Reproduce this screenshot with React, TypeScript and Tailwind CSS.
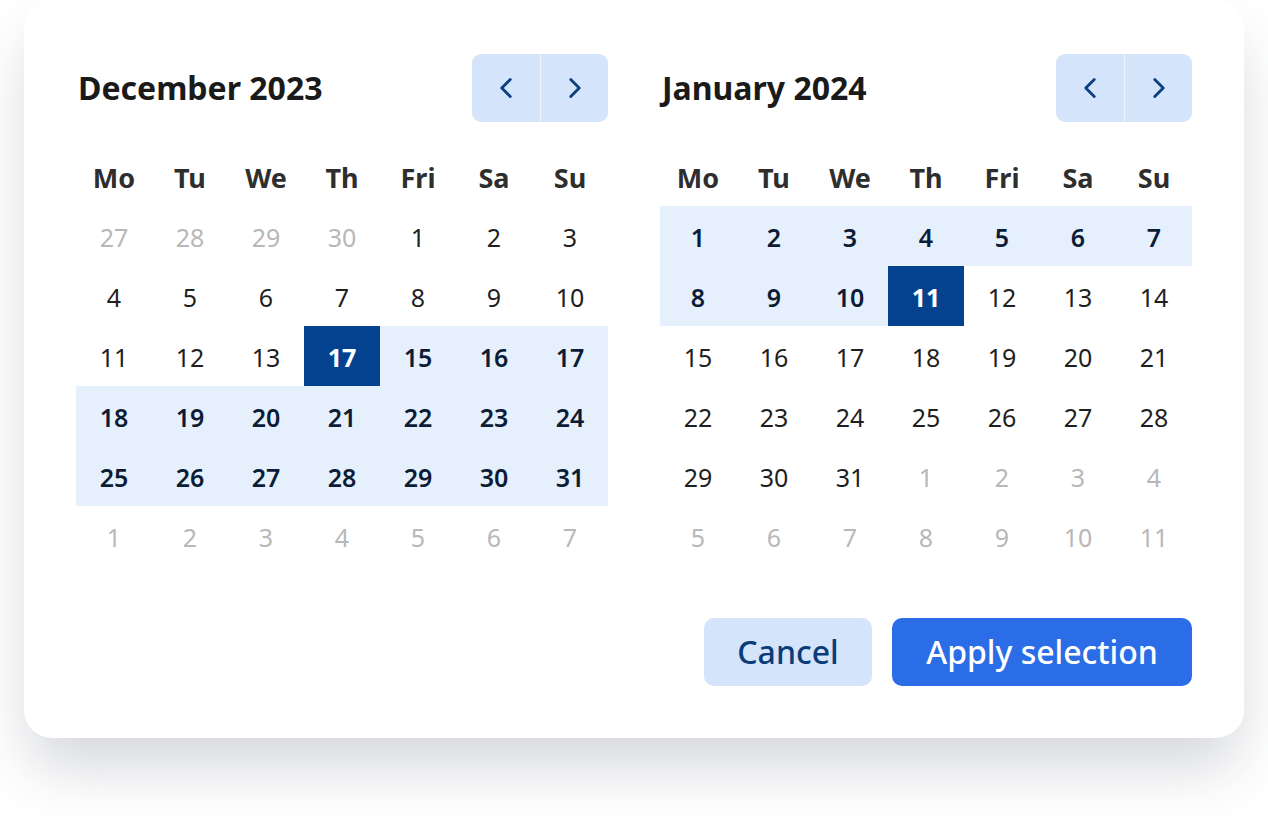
import { ChevronLeft, ChevronRight } from "lucide-react";

type Cell = { d: number; kind: "muted" | "normal" | "range" | "selected" };

const WEEKDAYS = ["Mo", "Tu", "We", "Th", "Fri", "Sa", "Su"];

function build(rows: [number, Cell["kind"]][][]): Cell[][] {
  return rows.map((r) => r.map(([d, kind]) => ({ d, kind })));
}

const m = "muted" as const;
const n = "normal" as const;
const r = "range" as const;
const s = "selected" as const;

const DECEMBER = build([
  [[27, m], [28, m], [29, m], [30, m], [1, n], [2, n], [3, n]],
  [[4, n], [5, n], [6, n], [7, n], [8, n], [9, n], [10, n]],
  [[11, n], [12, n], [13, n], [17, s], [15, r], [16, r], [17, r]],
  [[18, r], [19, r], [20, r], [21, r], [22, r], [23, r], [24, r]],
  [[25, r], [26, r], [27, r], [28, r], [29, r], [30, r], [31, r]],
  [[1, m], [2, m], [3, m], [4, m], [5, m], [6, m], [7, m]],
]);

const JANUARY = build([
  [[1, r], [2, r], [3, r], [4, r], [5, r], [6, r], [7, r]],
  [[8, r], [9, r], [10, r], [11, s], [12, n], [13, n], [14, n]],
  [[15, n], [16, n], [17, n], [18, n], [19, n], [20, n], [21, n]],
  [[22, n], [23, n], [24, n], [25, n], [26, n], [27, n], [28, n]],
  [[29, n], [30, n], [31, n], [1, m], [2, m], [3, m], [4, m]],
  [[5, m], [6, m], [7, m], [8, m], [9, m], [10, m], [11, m]],
]);

function DayCell({ cell }: { cell: Cell }) {
  const cls = {
    muted: "text-[#b8b8b8]",
    normal: "text-[#1f1f1f]",
    range: "bg-[#e6f0fd] font-semibold text-[#0c1c36]",
    selected: "bg-[#04428f] font-bold text-white",
  }[cell.kind];

  return (
    <div className={`flex h-[60px] items-center justify-center pt-[3px] text-[25px] ${cls}`}>
      {cell.d}
    </div>
  );
}

function Month({ title, weeks }: { title: string; weeks: Cell[][] }) {
  return (
    <div className="w-[532px]">
      <div className="flex h-[68px] items-center justify-between">
        <h2 className="pl-0.5 text-[32px] font-bold text-[#1a1a1a]">{title}</h2>

        <div className="flex h-[68px] overflow-hidden rounded-[9px] bg-[#d4e4fb]">
          <button className="flex w-[68px] items-center justify-center text-[#0e3f7e]">
            <ChevronLeft size={34} strokeWidth={2} />
          </button>
          <div className="w-px bg-[#eef4fe]" />
          <button className="flex w-[67px] items-center justify-center text-[#0e3f7e]">
            <ChevronRight size={34} strokeWidth={2} />
          </button>
        </div>
      </div>

      <div className="mt-6 grid grid-cols-7">
        {WEEKDAYS.map((w) => (
          <div
            key={w}
            className="flex h-[60px] items-center justify-center pt-1 text-[27px] font-bold text-[#2e2e2e]"
          >
            {w}
          </div>
        ))}
      </div>

      <div className="grid grid-cols-7">
        {weeks.flat().map((c, i) => (
          <DayCell key={i} cell={c} />
        ))}
      </div>
    </div>
  );
}

export default function App() {
  return (
    <div className="min-h-[834px] bg-white font-['Noto_Sans',sans-serif]">
      <div className="ml-6 w-[1220px] rounded-[28px] bg-white px-[52px] pb-[52px] pt-[54px] shadow-[0_34px_60px_-6px_rgba(40,48,72,0.2)]">
        <div className="flex gap-[52px]">
          <Month title="December 2023" weeks={DECEMBER} />
          <Month title="January 2024" weeks={JANUARY} />
        </div>

        <div className="mt-[52px] flex justify-end gap-5">
          <button className="h-[68px] w-[168px] rounded-[10px] bg-[#d4e4fb] text-[32px] font-medium text-[#0b3c7a]">
            Cancel
          </button>
          <button className="h-[68px] w-[300px] rounded-[10px] bg-[#2a6de6] text-[32px] font-medium text-white">
            Apply selection
          </button>
        </div>
      </div>
    </div>
  );
}
